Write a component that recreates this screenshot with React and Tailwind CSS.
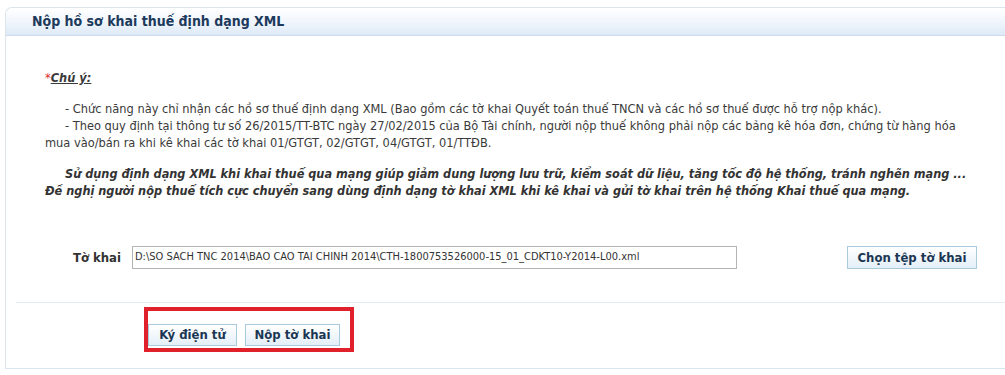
import React from "react";

const font = "font-['DejaVu_Sans_Condensed','DejaVu_Sans',sans-serif]";

const Btn = ({ children, className = "" }) => (
  <button
    type="button"
    className={`h-[22px] border border-[#a9c9dd] bg-gradient-to-b from-white to-[#e4eff8] text-[13px] font-bold text-[#1b3653] ${className}`}
  >
    {children}
  </button>
);

export default function App() {
  return (
    <div className={`w-[1005px] h-[375px] bg-white pt-[7px] pl-[5px] overflow-hidden ${font}`}>
      <div className="h-[362px] border-l border-t border-b border-[#dbe5ee] rounded-tl-[7px] flex flex-col">
        {/* header */}
        <div className="h-[28px] flex items-center pl-[26px] rounded-tl-[7px] bg-gradient-to-b from-white via-[#f1f6fc] to-[#deeaf7] border-b border-[#cddced]">
          <h1 className="text-[14px] font-bold text-[#1d3a5c]">
            Nộp hồ sơ khai thuế định dạng XML
          </h1>
        </div>

        {/* note */}
        <div className="pl-[39px] pt-[33px] text-[12.7px] text-[#3a3a3a] leading-[17px]">
          <p className="font-bold italic">
            <span className="text-[#e2262a] not-italic font-normal">*</span>
            <span className="underline">Chú ý:</span>
          </p>
          <div className="mt-[14px]">
            <p className="indent-[20px]">
              - Chức năng này chỉ nhận các hồ sơ thuế định dạng XML (Bao gồm các tờ khai Quyết toán thuế TNCN và các hồ sơ thuế được hỗ trợ nộp khác).
            </p>
            <p className="indent-[20px] whitespace-nowrap">
              - Theo quy định tại thông tư số 26/2015/TT-BTC ngày 27/02/2015 của Bộ Tài chính, người nộp thuế không phải nộp các bảng kê hóa đơn, chứng từ hàng hóa
            </p>
            <p>mua vào/bán ra khi kê khai các tờ khai 01/GTGT, 02/GTGT, 04/GTGT, 01/TTĐB.</p>
          </div>
          <div className="mt-[14px] font-bold italic text-[12.6px] text-[#333]">
            <p className="indent-[20px] whitespace-nowrap">
              Sử dụng định dạng XML khi khai thuế qua mạng giúp giảm dung lượng lưu trữ, kiểm soát dữ liệu, tăng tốc độ hệ thống, tránh nghẽn mạng ...
            </p>
            <p className="whitespace-nowrap">
              Đề nghị người nộp thuế tích cực chuyển sang dùng định dạng tờ khai XML khi kê khai và gửi tờ khai trên hệ thống Khai thuế qua mạng.
            </p>
          </div>
        </div>

        {/* file row */}
        <div className="mt-[47px] flex items-center h-[23px]">
          <span className="w-[126px] text-right pr-[11px] text-[13px] font-bold text-[#333]">Tờ khai</span>
          <div className="w-[605px] h-[23px] border border-[#b4b4b4] flex items-center pl-[2px] text-[11px] text-[#333]">
            D:\SO SACH TNC 2014\BAO CAO TAI CHINH 2014\CTH-1800753526000-15_01_CDKT10-Y2014-L00.xml
          </div>
          <Btn className="ml-[110px] w-[130px] h-[23px]">Chọn tệp tờ khai</Btn>
        </div>

        {/* separator */}
        <div className="mt-[33px] ml-[10px] border-t border-[#e6ebf0]" />

        {/* actions */}
        <div className="pl-[138px] pt-[4px]">
          <div className="inline-flex items-end gap-[8px] border-[4px] border-[#e0202b] pt-[14px] pb-[2px] pl-[0px] pr-[10px] h-[45px]">
            <Btn className="w-[89px]">Ký điện tử</Btn>
            <Btn className="w-[95px]">Nộp tờ khai</Btn>
          </div>
        </div>
      </div>
    </div>
  );
}
